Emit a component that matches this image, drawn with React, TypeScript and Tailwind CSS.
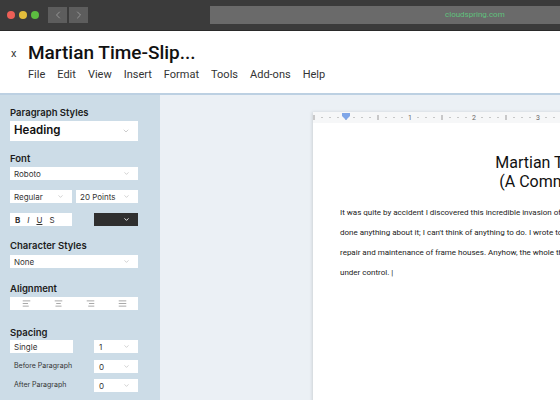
import { ChevronDown, ChevronLeft, ChevronRight, AlignLeft, AlignCenter, AlignRight, AlignJustify } from "lucide-react";

const MENU = ["File", "Edit", "View", "Insert", "Format", "Tools", "Add-ons", "Help"];

const BODY = [
  "It was quite by accident I discovered this incredible invasion of Earth by lifeforms from another planet. As yet, I haven't",
  "done anything about it; I can't think of anything to do. I wrote to the Government, and they sent back a pamphlet on the",
  "repair and maintenance of frame houses. Anyhow, the whole thing is known; I'm not the first to discover it. Maybe it's even",
  "under control. |",
];

function Select({ label, className = "", dark = false, big = false }: { label?: string; className?: string; dark?: boolean; big?: boolean }) {
  return (
    <div
      className={`flex items-center justify-between pl-1 pr-2 ${dark ? "bg-[#2f2f2f]" : "bg-white"} ${className}`}
    >
      <span className={big ? "text-[11.5px] font-semibold text-[#111]" : "text-[8px] text-[#333]"}>{label}</span>
      <ChevronDown size={big ? 8 : 7} strokeWidth={dark ? 3 : 1.5} className={dark ? "text-white" : "text-[#9a9a9a]"} />
    </div>
  );
}

function Label({ children, className = "" }: { children: string; className?: string }) {
  return <p className={`text-[9.5px] leading-[12px] font-semibold text-[#1c1c1c] ${className}`}>{children}</p>;
}

function Ruler() {
  const ticks = [];
  for (let k = -4; k <= 30; k++) {
    const x = 33 + k * 8;
    if (k % 8 === 0 && k > 0) {
      ticks.push(
        <text key={k} x={x} y={8} fontSize="7" textAnchor="middle" fill="#666" fontFamily="Roboto, sans-serif">
          {k / 8}
        </text>
      );
    } else if (k % 4 === 0) {
      ticks.push(<rect key={k} x={x - 0.5} y={3} width={1} height={5} fill="#999" />);
    } else {
      ticks.push(<rect key={k} x={x - 0.5} y={5} width={1} height={1} fill="#999" />);
    }
  }
  return (
    <svg width="490" height="11" className="block bg-[#f6f7f8]">
      {ticks}
      <path d="M29 1h8v3l-4 4l-4-4z" fill="#7fa6e8" />
    </svg>
  );
}

export default function App() {
  return (
    <div className="w-[560px] h-[400px] overflow-hidden bg-white flex flex-col" style={{ fontFamily: "Inter, sans-serif" }}>
      {/* browser chrome */}
      <div className="h-[31px] shrink-0 bg-[#3b3b3b] border-b border-[#2a2a2a] flex items-center pl-[7px]">
        <span className="w-2 h-2 rounded-full bg-[#ec5f57]" />
        <span className="w-2 h-2 rounded-full bg-[#e3bd3b] ml-1" />
        <span className="w-2 h-2 rounded-full bg-[#5cbd40] ml-1" />
        <div className="ml-[9px] flex gap-[2px]">
          <div className="w-[19px] h-[16px] bg-[#5d5d5d] flex items-center justify-center">
            <ChevronLeft size={12} className="text-[#a8a8a8]" strokeWidth={1.5} />
          </div>
          <div className="w-[19px] h-[16px] bg-[#5d5d5d] flex items-center justify-center">
            <ChevronRight size={12} className="text-[#a8a8a8]" strokeWidth={1.5} />
          </div>
        </div>
        <div className="ml-[122px] flex-1 h-[18px] bg-[#6a6a6a] flex items-center pl-[235px]">
          <span className="text-[8px] text-[#5fc27d]" style={{ fontFamily: "Roboto, sans-serif" }}>
            cloudspring.com
          </span>
        </div>
      </div>

      {/* header */}
      <div className="h-[64px] shrink-0 bg-white border-b-2 border-[#bcd0e2] flex" style={{ fontFamily: "Roboto, sans-serif" }}>
        <div className="w-[28px] pt-[15px] pl-[11px] text-[11px] text-[#333]">x</div>
        <div className="flex flex-col pt-[11px]">
          <h1 className="text-[19px] leading-[22px] font-medium text-[#111]">Martian Time-Slip...</h1>
          <div className="flex gap-[12px] mt-[3px] text-[11px] text-[#333]">
            {MENU.map((m) => (
              <span key={m}>{m}</span>
            ))}
          </div>
        </div>
      </div>

      <div className="flex flex-1 min-h-0">
        {/* sidebar */}
        <div className="w-[160px] shrink-0 bg-[#ccdce7] pl-[10px] pt-[12px] flex flex-col">
          <Label>Paragraph Styles</Label>
          <Select big label="Heading" className="w-[128px] h-[20px] mt-[2px]" />

          <Label className="mt-[12px]">Font</Label>
          <Select label="Roboto" className="w-[128px] h-[13px] mt-[2px]" />
          <div className="flex gap-[4px] mt-[10px]">
            <Select label="Regular" className="w-[62px] h-[13px]" />
            <Select label="20 Points" className="w-[62px] h-[13px]" />
          </div>
          <div className="flex mt-[10px]">
            <div className="w-[62px] h-[13px] bg-white flex items-center gap-[7px] pl-[5px] text-[8px] text-[#333]">
              <span className="font-bold">B</span>
              <span className="italic">I</span>
              <span className="underline">U</span>
              <span>S</span>
            </div>
            <Select dark className="w-[44px] h-[13px] ml-[22px]" />
          </div>

          <Label className="mt-[14px]">Character Styles</Label>
          <Select label="None" className="w-[128px] h-[13px] mt-[3px]" />

          <Label className="mt-[15px]">Alignment</Label>
          <div className="w-[128px] h-[13px] mt-[2px] bg-white flex items-center justify-around text-[#666]">
            <AlignLeft size={9} strokeWidth={1.5} />
            <AlignCenter size={9} strokeWidth={1.5} />
            <AlignRight size={9} strokeWidth={1.5} />
            <AlignJustify size={9} strokeWidth={1.5} />
          </div>

          <Label className="mt-[17px]">Spacing</Label>
          <div className="flex mt-[1px]">
            <div className="w-[63px] h-[13px] bg-white flex items-center pl-[4px] text-[8px] text-[#333]">Single</div>
            <Select label="1" className="w-[44px] h-[13px] ml-[21px] pl-[5px]" />
          </div>
          <div className="flex items-center mt-[7px]">
            <span className="w-[84px] pl-[4px] text-[7px] text-[#333]">Before Paragraph</span>
            <Select label="0" className="w-[44px] h-[13px] pl-[5px]" />
          </div>
          <div className="flex items-center mt-[6px]">
            <span className="w-[84px] pl-[4px] text-[7px] text-[#333]">After Paragraph</span>
            <Select label="0" className="w-[44px] h-[13px] pl-[5px]" />
          </div>
        </div>

        {/* document area */}
        <div className="flex-1 bg-[#ebf0f5] overflow-hidden pl-[153px] pt-[17px]" style={{ fontFamily: "Roboto, sans-serif" }}>
          <div className="w-[490px] shadow-[-1px_0_3px_rgba(0,0,0,0.12)]">
            <Ruler />
            <div className="bg-white h-[300px] pt-[30px] pl-[27px] pr-[27px]">
              <div className="text-center text-[16px] leading-[19px] text-[#111]">
                <p>Martian Time-Slip</p>
                <p>(A Commentary)</p>
              </div>
              <div className="mt-[12px] text-[8px] leading-[20px] text-[#1a1a1a]">
                {BODY.map((l, i) => (
                  <p key={i} className="whitespace-nowrap">
                    {l}
                  </p>
                ))}
              </div>
            </div>
          </div>
        </div>
      </div>
    </div>
  );
}
